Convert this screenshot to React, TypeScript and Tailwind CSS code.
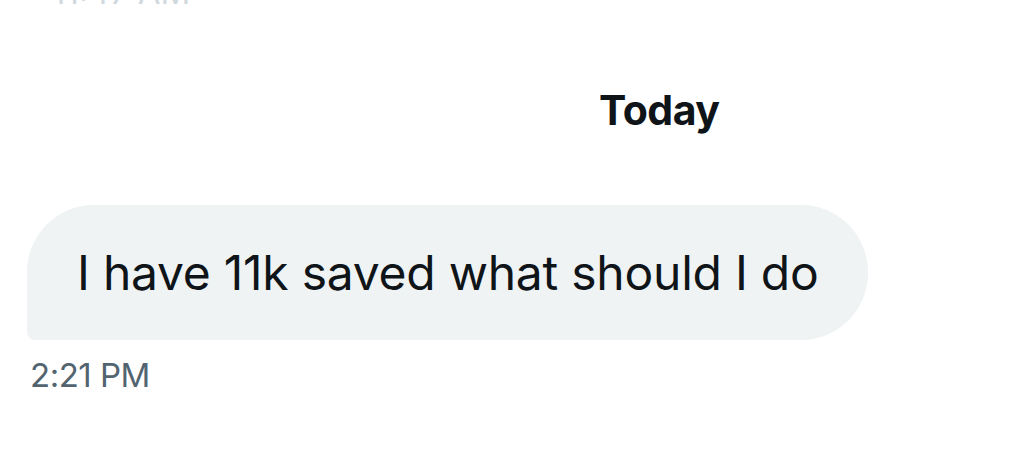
export default function App() {
  return (
    <div className="w-[1014px] h-[468px] overflow-hidden bg-white font-['Inter','Liberation_Sans',sans-serif]">
      {/* previous message timestamp, cut off at the top */}
      <div className="h-[6px] overflow-hidden pl-[52px]">
        <p className="-mt-[22px] text-[33px] leading-[28px] text-[#cfd9de]">11:47 AM</p>
      </div>

      {/* date divider */}
      <div className="flex pl-[599px] pt-[80px]">
        <span className="text-[41px] font-bold leading-[48px] tracking-[-0.5px] text-[#0f1419]">Today</span>
      </div>

      {/* message */}
      <div className="flex flex-col items-start pl-[27px] pt-[71px]">
        <div className="flex h-[135px] items-center rounded-t-[67px] rounded-br-[67px] rounded-bl-[8px] bg-[#eff3f4] pl-[50px] pr-[50px]">
          <p className="text-[48px] leading-[56px] tracking-[-0.25px] text-[#0f1419]">I have 11k saved what should I do</p>
        </div>
        <span className="mt-[15px] pl-[3px] text-[33px] leading-[40px] tracking-[-0.5px] text-[#536471]">2:21 PM</span>
      </div>
    </div>
  );
}
